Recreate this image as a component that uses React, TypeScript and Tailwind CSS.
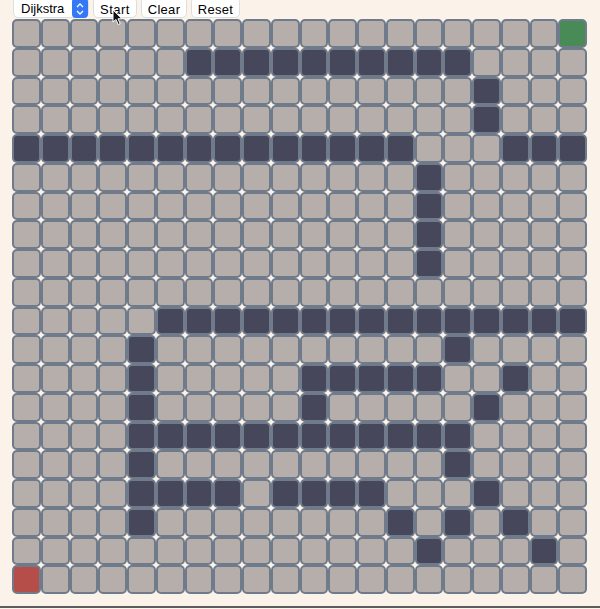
const board = [
  "...................G",
  "......##########....",
  "................#...",
  "................#...",
  "##############...###",
  "..............#.....",
  "..............#.....",
  "..............#.....",
  "..............#.....",
  "....................",
  ".....###############",
  "....#..........#....",
  "....#.....#####..#..",
  "....#.....#.....#...",
  "....############....",
  "....#..........#....",
  "....####.####...#...",
  "....#........#.#.#..",
  "..............#...#.",
  "R...................",
];

function cellColor(ch: string) {
  if (ch === "#") return "bg-[#46475a]";
  if (ch === "G") return "bg-[#488b57]";
  if (ch === "R") return "bg-[#b54e48]";
  return "bg-[#b5aeab]";
}

function Cursor() {
  return (
    <svg
      className="absolute left-[112px] top-[9px]"
      width="12"
      height="17"
      viewBox="0 0 12 17"
    >
      <path
        d="M1 1 L1 13 L4 10.5 L6.2 15.5 L8.2 14.6 L6 9.8 L10 9.8 Z"
        fill="#111"
        stroke="#fff"
        strokeWidth="1"
        strokeLinejoin="round"
      />
    </svg>
  );
}

export default function App() {
  return (
    <div className="relative w-[600px] h-[609px] overflow-hidden bg-[#fbf3ea] font-['Liberation_Sans',Arial,sans-serif] text-[13px] text-black">
      {/* Controls */}
      <div className="flex items-start h-[19px] pl-[13px] gap-[4px]">
        <div className="-mt-[3px] h-[21px] w-[76px] flex items-center justify-between rounded-[5px] bg-white border border-[#dedede] pl-[7px]">
          <span className="pt-[2px]">Dijkstra</span>
          <span className="h-[20px] w-[16px] rounded-[4px] bg-[#3478f6] flex flex-col items-center justify-center gap-[2px] pt-[2px]">
            <svg width="8" height="5" viewBox="0 0 8 5">
              <path d="M1 4 L4 1 L7 4" fill="none" stroke="#fff" strokeWidth="1.3" />
            </svg>
            <svg width="8" height="5" viewBox="0 0 8 5">
              <path d="M1 1 L4 4 L7 1" fill="none" stroke="#fff" strokeWidth="1.3" />
            </svg>
          </span>
        </div>
        <button className="-mt-[3px] h-[21px] w-[44px] rounded-[5px] bg-white border border-[#dedede] pt-[2px] tracking-[0.5px]">
          Start
        </button>
        <button className="-mt-[3px] h-[21px] w-[46px] rounded-[5px] bg-white border border-[#dedede] pt-[2px] tracking-[0.3px]">
          Clear
        </button>
        <button className="-mt-[3px] h-[21px] w-[49px] rounded-[5px] bg-white border border-[#dedede] pt-[2px] tracking-[0.3px]">
          Reset
        </button>
      </div>

      {/* Grid */}
      <div className="ml-[12px] w-[575px] grid grid-cols-20">
        {board.flatMap((row, r) =>
          row.split("").map((ch, c) => (
            <div
              key={`${r}-${c}`}
              className={`h-[28.75px] rounded-[5px] border-2 border-[#6f7b8b] ${cellColor(ch)}`}
            />
          ))
        )}
      </div>

      <div className="mt-[12px] h-[2px] w-full bg-[#5c5c5c]" />

      <Cursor />
    </div>
  );
}
